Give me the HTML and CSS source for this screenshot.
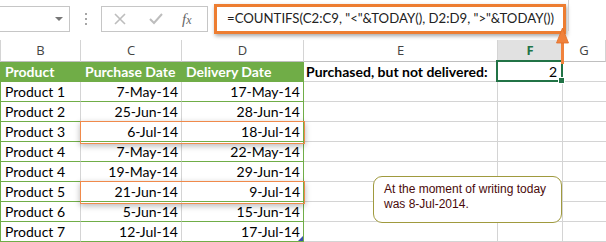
FILE: index.html
```html
<!DOCTYPE html>
<html>
<head>
<meta charset="utf-8">
<link rel="stylesheet" href="styles.css">
</head>
<body>
<div class="app">
  <div class="toolbar">
    <div class="namebox"><span class="dd"></span></div>
    <div class="dots"><i></i><i></i><i></i></div>
    <div class="fxbtns">
      <svg class="ico-x" width="12" height="12" viewBox="0 0 12 12"><path d="M1 1L11 11M11 1L1 11" stroke="#bdbdbd" stroke-width="1.6" fill="none"/></svg>
      <svg class="ico-ok" width="14" height="12" viewBox="0 0 14 12"><path d="M1 6L5 10L13 1" stroke="#bdbdbd" stroke-width="2" fill="none"/></svg>
      <span class="fx">f<span class="fxx">x</span></span>
    </div>
    <div class="formula">
      <div class="formula-hl">=COUNTIFS(C2:C9, "&lt;"&amp;TODAY(), D2:D9, "&gt;"&amp;TODAY())</div>
      <div class="formula-rest"></div>
    </div>
  </div>

  <div class="sheet">
    <div class="h">B</div><div class="h">C</div><div class="h">D</div><div class="h">E</div><div class="h hsel">F</div><div class="h">G</div>

    <div class="c b th">Product</div><div class="c th">Purchase Date</div><div class="c th thd">Delivery Date</div><div class="c e lbl">Purchased, but not delivered:</div><div class="c f sel">2</div><div class="c g"></div>

    <div class="c b tb">Product 1</div><div class="c tb r">7-May-14</div><div class="c tb d r">17-May-14</div><div class="c e"></div><div class="c f"></div><div class="c g"></div>
    <div class="c b tb">Product 2</div><div class="c tb r">25-Jun-14</div><div class="c tb d r">28-Jun-14</div><div class="c e"></div><div class="c f"></div><div class="c g"></div>
    <div class="c b tb">Product 3</div><div class="c tb r hl">6-Jul-14</div><div class="c tb d r">18-Jul-14</div><div class="c e"></div><div class="c f"></div><div class="c g"></div>
    <div class="c b tb">Product 4</div><div class="c tb r">7-May-14</div><div class="c tb d r">22-May-14</div><div class="c e"></div><div class="c f"></div><div class="c g"></div>
    <div class="c b tb">Product 4</div><div class="c tb r">19-May-14</div><div class="c tb d r">29-Jun-14</div><div class="c e"></div><div class="c f"></div><div class="c g"></div>
    <div class="c b tb">Product 5</div><div class="c tb r hl">21-Jun-14</div><div class="c tb d r">9-Jul-14</div><div class="c e"></div><div class="c f"></div><div class="c g"></div>
    <div class="c b tb">Product 6</div><div class="c tb r">5-Jun-14</div><div class="c tb d r">15-Jun-14</div><div class="c e"></div><div class="c f"></div><div class="c g"></div>
    <div class="c b tb">Product 7</div><div class="c tb r">12-Jul-14</div><div class="c tb d r last">17-Jul-14</div><div class="c e"></div><div class="c f"></div><div class="c g"></div>
  </div>

  <div class="callout">At the moment of writing today<br>was 8-Jul-2014.</div>

  <svg class="arrow" width="16" height="40" viewBox="0 0 16 40">
    <rect x="6" y="16" width="3" height="22" fill="#f0823c"/>
    <path d="M7.5 2L1.5 17H13.5Z" fill="#f0823c" stroke="#e0702a" stroke-width="0.8"/>
  </svg>
</div>
</body>
</html>
```

FILE: styles.css
```css
* { box-sizing: border-box; }
html, body { margin: 0; padding: 0; background: #fff; }
body { width: 606px; height: 242px; overflow: hidden; }

.app { position: relative; width: 606px; height: 242px; font-family: Lato, "Open Sans", sans-serif; }

.toolbar { height: 40px; display: flex; align-items: flex-start; }

.namebox { margin-left: -2px; margin-top: 6px; width: 72px; height: 26px; border: 1px solid #c6c6c6; position: relative; }
.namebox .dd { position: absolute; right: 6px; top: 10px; width: 0; height: 0; border-left: 4px solid transparent; border-right: 4px solid transparent; border-top: 4px solid #777; }

.dots { width: 31px; margin-top: 13px; display: flex; flex-direction: column; align-items: center; gap: 3px; }
.dots i { display: block; width: 2px; height: 2px; background: #a6a6a6; }

.fxbtns { margin-top: 6px; width: 107px; height: 26px; border: 1px solid #c6c6c6; display: flex; align-items: center; padding-left: 12px; }
.fxbtns .ico-x { margin-right: 23px; }
.fxbtns .ico-ok { margin-right: 19px; }
.fx { font-family: "Liberation Serif", serif; font-style: italic; font-size: 15px; color: #666; line-height: 1; }
.fxx { font-size: 12px; }

.formula { flex: 1; display: flex; align-items: flex-start; padding-left: 6px; }
.formula-hl { margin-top: 4px; width: 352px; height: 30px; border: 3px solid #ed7d31; box-shadow: 1px 2px 4px rgba(0,0,0,0.35); font-family: Lato, sans-serif; font-size: 13.2px; color: #222; padding-left: 10px; line-height: 23px; white-space: nowrap; overflow: hidden; }
.formula-rest { margin-left: 2px; width: 1px; height: 31px; background: #d0d0d0; }

.sheet { display: grid; grid-template-columns: 81px 101px 122px 194px 65px 1fr; grid-template-rows: 22px repeat(9, 20px); }

.h { border-right: 1px solid #d4d4d4; border-bottom: 1px solid #bfbfbf; font-family: "Open Sans", sans-serif; font-size: 13px; color: #444; text-align: center; line-height: 21px; }
.h:first-child { border-left: 1px solid #d4d4d4; }
.hsel { background: #e1e1e1; color: #217346; font-weight: bold; border-bottom: 2px solid #217346; }

.c { border-right: 1px solid #d4d4d4; border-bottom: 1px solid #d4d4d4; font-size: 14px; line-height: 19px; padding: 0 3px 0 4px; white-space: nowrap; color: #000; }
.c.b { border-left: 1px solid #70ad47; }
.c.r { text-align: right; }
.th { background: #70ad47; color: #fff; font-weight: bold; border-right-color: #70ad47; border-bottom-color: #70ad47; }
.c.b.th { border-left-color: #70ad47; }
.tb { border-bottom-color: #70ad47; }
.c.d { border-right-color: #70ad47; }
.c.last { position: relative; }
.c.last::after { content: ""; position: absolute; right: 0; bottom: 0; width: 0; height: 0; border-left: 5px solid transparent; border-bottom: 5px solid #3a4fb0; }
.lbl { font-weight: bold; padding-left: 2px; }
.f.sel { position: relative; text-align: right; padding-right: 5px; }
.f.sel::after { content: ""; position: absolute; left: -2px; top: -2px; right: -1px; bottom: -1px; border: 2px solid #217346; }
.f.sel::before { content: ""; position: absolute; right: -3px; bottom: -3px; width: 5px; height: 5px; background: #217346; border: 1px solid #fff; z-index: 1; }
.g { border-right: none; }

.c.hl { position: relative; }
.c.hl::after { content: ""; position: absolute; left: -1px; top: -1px; width: 223px; height: 21px; border: 1px solid #f08a4b; box-shadow: 0 2px 6px rgba(0,0,0,0.28); pointer-events: none; }

.callout { position: absolute; left: 373px; top: 176px; width: 189px; height: 47px; border: 1.5px solid #a09a3e; border-radius: 9px; background: #fff; font-family: "Liberation Sans", Arial, sans-serif; font-size: 12px; line-height: 15px; color: #4a0a0a; padding: 5px 0 0 10px; }

.arrow { position: absolute; left: 555px; top: 26px; }
```
